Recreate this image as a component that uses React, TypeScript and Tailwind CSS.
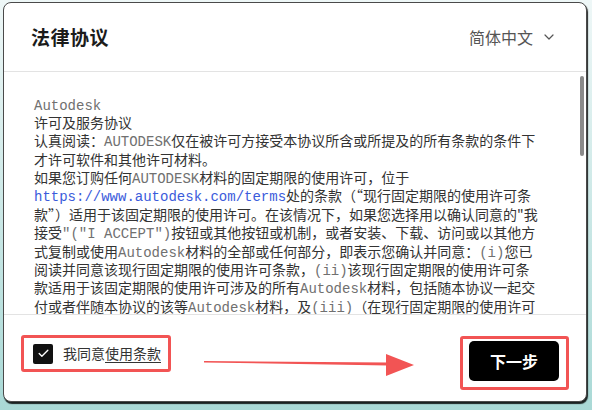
import React from 'react';
import { ChevronDown, Check } from 'lucide-react';

const cjk = "font-['Noto_Sans_CJK_SC','Noto_Sans',sans-serif]";

function M({ children, blue }: { children: React.ReactNode; blue?: boolean }) {
  return (
    <span className={`leading-none font-['Liberation_Mono','Courier_New',monospace] ${blue ? 'text-[#3b5bdb]' : 'text-[#707070]'}`}>
      {children}
    </span>
  );
}

function Line({ children }: { children: React.ReactNode }) {
  return <div className="h-[18.4px] leading-[18.4px]">{children}</div>;
}

export default function App() {
  return (
    <div className="w-[592px] h-[410px] overflow-hidden bg-gradient-to-b from-[#eef7f7] to-[#a9d9d6] pt-[2px] pl-[3px]">
      <div className={`relative w-[584px] h-[400px] bg-white border border-[#4a4a4a] rounded-[8px] shadow-[1px_2px_1px_rgba(0,0,0,0.85)] flex flex-col overflow-hidden ${cjk}`}>
        {/* Header */}
        <div className="h-[69px] shrink-0 flex items-center justify-between pl-[27px] pr-[29px] border-b border-[#e3e3e3]">
          <h1 className="text-[19px] font-bold text-[#1b1b1b] tracking-[0.5px]">法律协议</h1>
          <div className="flex items-center gap-[8px] text-[16px] text-[#555]">
            <span>简体中文</span>
            <ChevronDown className="w-[16px] h-[16px]" strokeWidth={1.8} />
          </div>
        </div>

        {/* Agreement text */}
        <div className="relative h-[242px] shrink-0 overflow-hidden pl-[30px] pt-[22.5px] text-[14px] text-[#333] whitespace-nowrap">
          <Line><M>Autodesk</M></Line>
          <Line>许可及服务协议</Line>
          <Line>认真阅读：<M>AUTODESK</M>仅在被许可方接受本协议所含或所提及的所有条款的条件下</Line>
          <Line>才许可软件和其他许可材料。</Line>
          <Line>如果您订购任何<M>AUTODESK</M>材料的固定期限的使用许可，位于</Line>
          <Line><M blue>https://www.autodesk.com/terms</M>处的条款（“现行固定期限的使用许可条</Line>
          <Line>款”）适用于该固定期限的使用许可。在该情况下，如果您选择用以确认同意的"我</Line>
          <Line>接受<M>"("I ACCEPT")</M>按钮或其他按钮或机制，或者安装、下载、访问或以其他方</Line>
          <Line>式复制或使用<M>Autodesk</M>材料的全部或任何部分，即表示您确认并同意：<M>(i)</M>您已</Line>
          <Line>阅读并同意该现行固定期限的使用许可条款，<M>(ii)</M>该现行固定期限的使用许可条</Line>
          <Line>款适用于该固定期限的使用许可涉及的所有<M>Autodesk</M>材料，包括随本协议一起交</Line>
          <Line>付或者伴随本协议的该等<M>Autodesk</M>材料，及<M>(iii)</M>（在现行固定期限的使用许可</Line>
          <Line>条款适用的情况下）本协议不适用于该等材料。</Line>
          <div className="absolute right-[2px] top-[4px] w-[4px] h-[80px] rounded-full bg-[#8a8a8a]" />
        </div>

        {/* Footer */}
        <div className="relative flex-1 border-t border-[#e3e3e3] flex justify-between pl-[17px] pr-[17px]">
          <div className="mt-[20px] self-start h-[37px] w-[150px] border-[3px] border-[#f25454] rounded-[3px] flex items-center pl-[9px] gap-[10px]">
            <div className="w-[20px] h-[20px] rounded-[2px] bg-[#111] flex items-center justify-center">
              <Check className="w-[13px] h-[13px] text-white" strokeWidth={2.5} />
            </div>
            <span className="text-[14px] text-[#333]">
              我同意<span className="underline underline-offset-[3px]">使用条款</span>
            </span>
          </div>
          <div className="mt-[21px] self-start border-[3px] border-[#f25454] rounded-[3px] pt-[2px] pb-[6px] pl-[6px] pr-[7px]">
            <button className="w-[90px] h-[40px] bg-black rounded-[5px] text-white text-[16px] font-bold">下一步</button>
          </div>
          <svg className="absolute left-[196px] top-[33px]" width="220" height="30" viewBox="0 0 220 30">
            <polygon points="4,13 188,14.5 188,17.5 4,14.5" fill="#f25454" />
            <polygon points="186,6 214,17 186,28" fill="#f25454" />
          </svg>
        </div>
      </div>
    </div>
  );
}
